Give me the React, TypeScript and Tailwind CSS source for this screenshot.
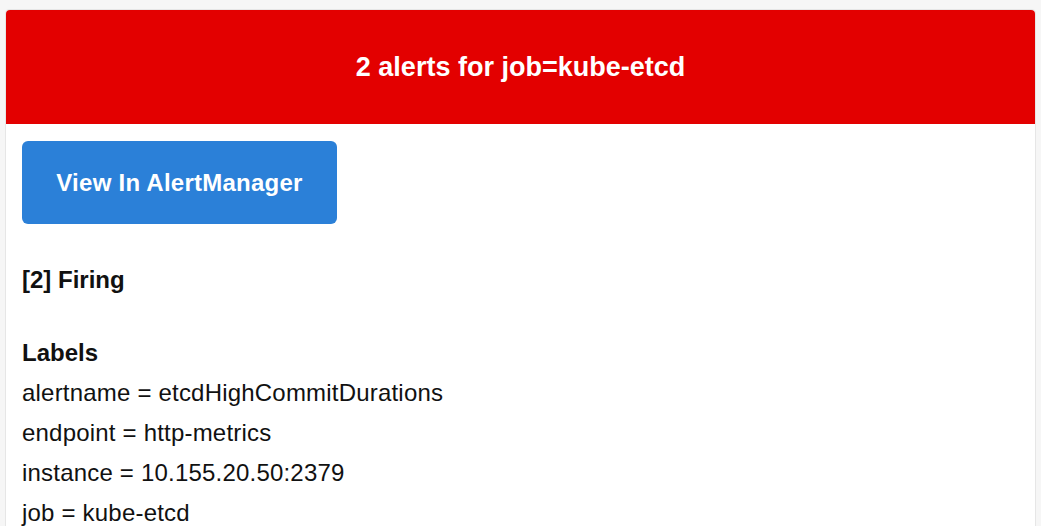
const labels = [
  ['alertname', 'etcdHighCommitDurations'],
  ['endpoint', 'http-metrics'],
  ['instance', '10.155.20.50:2379'],
  ['job', 'kube-etcd'],
];

export default function App() {
  return (
    <div className="min-h-screen bg-[#f6f6f6] px-[5px] pt-[9px] font-['Liberation_Sans',Arial,sans-serif]">
      <div className="rounded-t-[4px] border border-[#e6e6e6] bg-white">
        {/* Header */}
        <div className="flex h-[114px] items-center justify-center rounded-t-[4px] bg-[#e30000]">
          <h1 className="text-[27px] font-bold text-white">2 alerts for job=kube-etcd</h1>
        </div>

        <div className="px-[16px] pt-[17px] pb-6 text-[#111]">
          <button className="flex h-[83px] w-[315px] items-center justify-center rounded-[6px] bg-[#2b80d8] text-[24px] font-bold tracking-[0.25px] text-white">
            View In AlertManager
          </button>

          <div className="mt-[44px] text-[24px] font-bold leading-[24px]">[2] Firing</div>

          <div className="mt-[49px] text-[24px] font-bold leading-[24px]">Labels</div>
          <ul className="mt-[16px] flex flex-col gap-[16px] text-[24px] leading-[24px] tracking-[0.2px]">
            {labels.map(([k, v]) => (
              <li key={k}>
                {k} = {v}
              </li>
            ))}
          </ul>
        </div>
      </div>
    </div>
  );
}
